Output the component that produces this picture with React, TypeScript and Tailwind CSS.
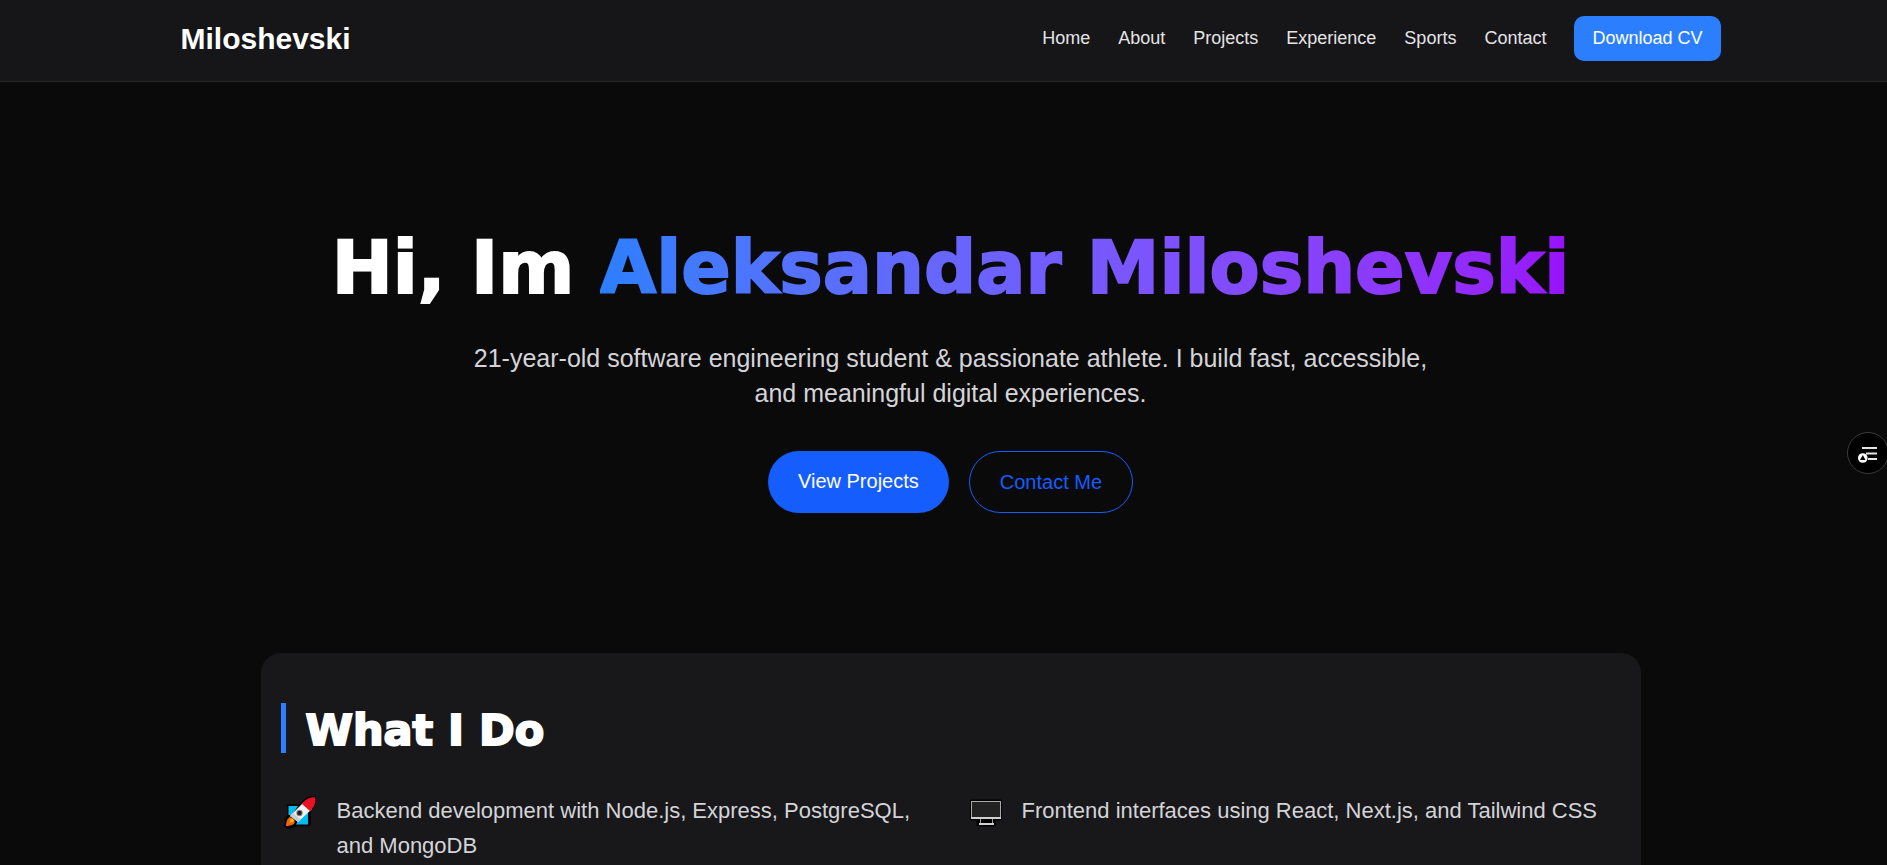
import React from "react";

const links = ["Home", "About", "Projects", "Experience", "Sports", "Contact"];

function Rocket() {
  return (
    <svg viewBox="0 0 36 36" className="ml-0.5 h-9 w-9 shrink-0" aria-hidden="true">
      <g stroke="#000" strokeWidth="3.500" strokeLinejoin="round" fill="#000">
        <path d="M5.500 13H17L26 18V31.500H15L5 34 3 33l1-7 2-3z" />
        <path d="M9 21 22 8q4-4 9-3 2 5-3 10L15 28z" />
      </g>
      <path d="M5.500 13H15l-6 9H5.500zM25 19v12.500H13l3-5z" fill="#00bcf2" />
      <path d="M7 24c-3 1-4 6-4 9 4 0 8-1 9-4z" fill="#f7630c" />
      <path d="M9 25c-2 1-2 2-2 4.500 2.500 0 4-1 4.500-2z" fill="#ffb900" />
      <path d="m7 23 14-14 8 7-14 13z" fill="#f2f2f2" />
      <path d="m7 23 3-3 8 6.500L15 29z" fill="#ccc" />
      <path d="M19 11c3-4 8-7.500 13-6.500 1.500 5-1 10-5 13.500z" fill="#e81224" />
      <circle cx="16.500" cy="20" r="3.200" fill="#8a8a8a" />
      <circle cx="16.500" cy="20" r="2.300" fill="#222" />
    </svg>
  );
}

function Monitor() {
  return (
    <svg viewBox="0 0 36 36" className="ml-0.5 h-9 w-9 shrink-0" aria-hidden="true">
      <path d="M3.500 8h29v18h-6v6H10v-6H3.500z" fill="#000" stroke="#000" strokeWidth="3" strokeLinejoin="round" />
      <rect x="3.500" y="8.500" width="29" height="16" fill="#222" stroke="#aaa" />
      <path d="M3 25h30" stroke="#d0d0d0" strokeWidth="2" />
      <path d="M12.500 26v4M24.500 26v4" stroke="#999" />
      <path d="M11 31h15" stroke="#d0d0d0" strokeWidth="2" />
    </svg>
  );
}

export default function App() {
  return (
    <div className="min-h-screen overflow-hidden bg-[#0a0a0a] font-['Liberation_Sans',Arial,sans-serif] text-white">
      <header className="border-b border-[#27272a] bg-[#161618] pl-3.5">
        <div className="mx-auto flex max-w-[1600px] items-center justify-between px-[30px] pt-4 pb-5">
          <a href="#home" className="text-[30px] leading-[45px] font-bold">
            Miloshevski
          </a>
          <nav className="flex items-center gap-7 text-[18px] leading-[25px] text-zinc-200">
            {links.map((l) => (
              <a key={l} href={`#${l.toLowerCase()}`}>
                {l}
              </a>
            ))}
            <a href="#cv" className="rounded-[10px] bg-[#2b7fff] px-[18px] py-2.5 text-white">
              Download CV
            </a>
          </nav>
        </div>
      </header>

      <main className="pl-3.5">
        <section className="flex flex-col items-center pt-[148px] text-center">
          <h1 className="font-['DejaVu_Sans',sans-serif] text-[73px] leading-[75px] font-black whitespace-nowrap [-webkit-text-stroke-width:2px]">
            Hi, Im{" "}
            <span className="bg-gradient-to-r from-[#2b7fff] to-[#9810fa] bg-clip-text text-transparent">
              Aleksandar Miloshevski
            </span>
          </h1>
          <p className="mt-9 max-w-[960px] text-[25px] leading-[35px] text-zinc-300">
            21-year-old software engineering student &amp; passionate athlete. I build fast, accessible, and meaningful
            digital experiences.
          </p>
          <div className="mt-10 flex gap-5 text-[20px] leading-[30px]">
            <a href="#projects" className="rounded-full bg-[#155dfc] px-[30px] py-[15px]">
              View Projects
            </a>
            <a href="#contact" className="rounded-full border border-[#155dfc] px-[30px] py-[15px] text-[#155dfc]">
              Contact Me
            </a>
          </div>
        </section>

        <section className="mx-auto mt-[140px] max-w-[1380px] rounded-[20px] bg-[#18181b] px-5 py-[50px]">
          <h2 className="border-l-[5px] border-[#2b7fff] pt-1 pl-5 font-['DejaVu_Sans',sans-serif] text-[43px] leading-[46px] font-black [-webkit-text-stroke-width:2px]">
            What I Do
          </h2>
          <ul className="mt-10 grid grid-cols-2 gap-[30px] text-[22px] leading-[35px] text-zinc-300">
            <li className="flex items-start gap-[18px]">
              <Rocket />
              <span>Backend development with Node.js, Express, PostgreSQL, and MongoDB</span>
            </li>
            <li className="flex items-start gap-[18px]">
              <Monitor />
              <span>Frontend interfaces using React, Next.js, and Tailwind CSS</span>
            </li>
          </ul>
        </section>
      </main>

      <button
        type="button"
        aria-label="Open reading list"
        className="fixed top-[432px] -right-0.5 flex h-[42px] w-[42px] items-center justify-center rounded-full border border-[#3a3a3a] bg-black"
      >
        <svg viewBox="0 0 20 20" className="h-5 w-5" fill="none" aria-hidden="true">
          <path d="M4 5h15M8 10.500h11M10 16h9" stroke="#e4e4e4" strokeWidth="1.800" />
          <circle cx="4.800" cy="15" r="4.800" fill="#fff" />
          <path d="M4.800 12 7.500 17H2z" fill="#000" />
        </svg>
      </button>
    </div>
  );
}
